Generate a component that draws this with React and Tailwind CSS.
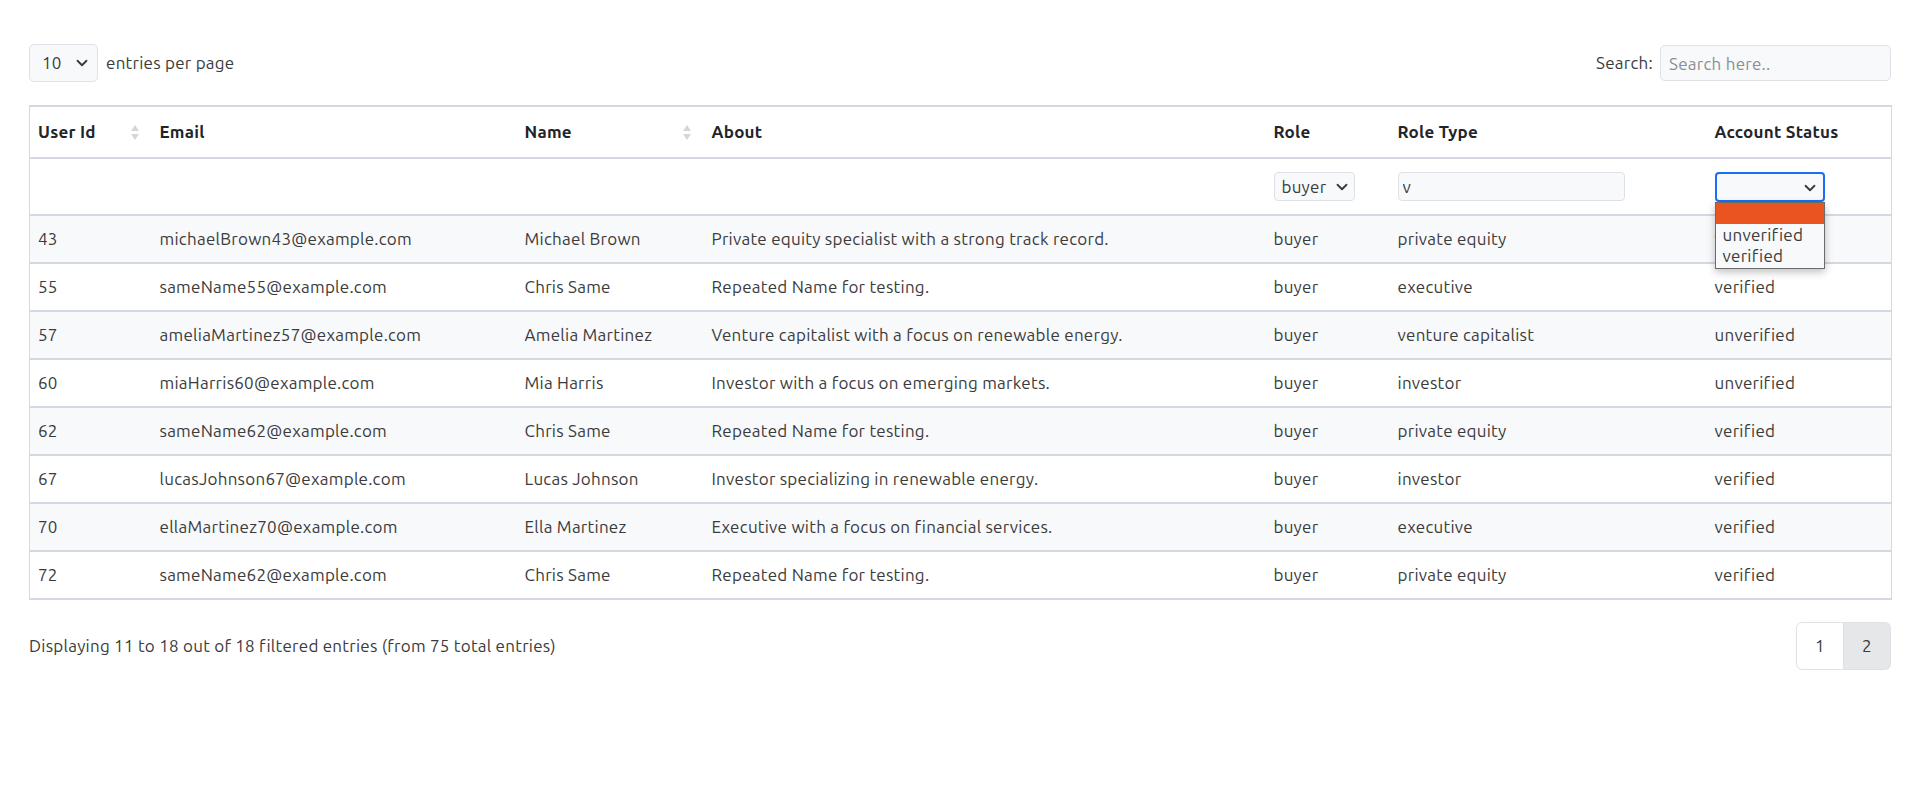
import { useState } from 'react'

const rows = [
  { id: 43, email: 'michaelBrown43@example.com', name: 'Michael Brown', about: 'Private equity specialist with a strong track record.', role: 'buyer', type: 'private equity', status: 'verified' },
  { id: 55, email: 'sameName55@example.com', name: 'Chris Same', about: 'Repeated Name for testing.', role: 'buyer', type: 'executive', status: 'verified' },
  { id: 57, email: 'ameliaMartinez57@example.com', name: 'Amelia Martinez', about: 'Venture capitalist with a focus on renewable energy.', role: 'buyer', type: 'venture capitalist', status: 'unverified' },
  { id: 60, email: 'miaHarris60@example.com', name: 'Mia Harris', about: 'Investor with a focus on emerging markets.', role: 'buyer', type: 'investor', status: 'unverified' },
  { id: 62, email: 'sameName62@example.com', name: 'Chris Same', about: 'Repeated Name for testing.', role: 'buyer', type: 'private equity', status: 'verified' },
  { id: 67, email: 'lucasJohnson67@example.com', name: 'Lucas Johnson', about: 'Investor specializing in renewable energy.', role: 'buyer', type: 'investor', status: 'verified' },
  { id: 70, email: 'ellaMartinez70@example.com', name: 'Ella Martinez', about: 'Executive with a focus on financial services.', role: 'buyer', type: 'executive', status: 'verified' },
  { id: 72, email: 'sameName62@example.com', name: 'Chris Same', about: 'Repeated Name for testing.', role: 'buyer', type: 'private equity', status: 'verified' },
]

function Chevron({ className = '' }) {
  return (
    <svg className={className} width="12" height="12" viewBox="0 0 16 16" fill="none">
      <path d="M2 5l6 6 6-6" stroke="#343a40" strokeWidth="2.4" strokeLinecap="round" strokeLinejoin="round" />
    </svg>
  )
}

function SortIcon() {
  return (
    <span className="flex flex-col items-center gap-[3px]">
      <span className="w-0 h-0 border-x-[4px] border-x-transparent border-b-[6px] border-b-[#d6d6d6]" />
      <span className="w-0 h-0 border-x-[4px] border-x-transparent border-t-[6px] border-t-[#d6d6d6]" />
    </span>
  )
}

function HeadCell({ label, sortable }) {
  return (
    <th className="px-2 text-left font-bold text-[#212529] align-middle">
      <div className="flex items-center justify-between pr-[5px]">
        <span>{label}</span>
        {sortable && <SortIcon />}
      </div>
    </th>
  )
}

export default function App() {
  const [perPage, setPerPage] = useState('10')
  const [roleType, setRoleType] = useState('v')

  return (
    <div className="min-h-[801px] bg-white px-[29px] pt-[44px] text-[17px] tracking-[0.25px] text-[#3b3b3b]" style={{ fontFamily: 'Ubuntu, "Noto Sans", "Open Sans", sans-serif' }}>
      <div className="flex items-center justify-between">
        <div className="flex items-center gap-[8px]">
          <div className="relative">
            <select
              value={perPage}
              onChange={(e) => setPerPage(e.target.value)}
              className="appearance-none w-[69px] h-[38px] pl-[12px] rounded-[5px] border border-[#dee2e6] bg-[#f8f9fa] text-[#3b3b3b] outline-none"
            >
              <option>5</option>
              <option>10</option>
              <option>15</option>
            </select>
            <Chevron className="absolute right-[10px] top-[13px] pointer-events-none" />
          </div>
          <span>entries per page</span>
        </div>
        <div className="flex items-center gap-[7px]">
          <span>Search:</span>
          <input
            placeholder="Search here.."
            className="w-[231px] h-[36px] px-[8px] rounded-[5px] border border-[#dee2e6] bg-[#f8f9fa] outline-none placeholder:text-[#8a8f94]"
          />
        </div>
      </div>

      <table className="mt-[23px] w-[1862px] table-fixed border-collapse border-x border-[#d5d8e0]">
        <colgroup>
          <col className="w-[122px]" />
          <col className="w-[365px]" />
          <col className="w-[187px]" />
          <col className="w-[562px]" />
          <col className="w-[124px]" />
          <col className="w-[317px]" />
          <col className="w-[185px]" />
        </colgroup>
        <thead>
          <tr className="h-[52px] border-y-2 border-[#d5d8e0]">
            <HeadCell label="User Id" sortable />
            <HeadCell label="Email" />
            <HeadCell label="Name" sortable />
            <HeadCell label="About" />
            <HeadCell label="Role" />
            <HeadCell label="Role Type" />
            <HeadCell label="Account Status" />
          </tr>
          <tr className="h-[57px] border-b-2 border-[#d5d8e0]">
            <th />
            <th />
            <th />
            <th />
            <th className="px-2 text-left font-normal">
              <div className="relative w-[81px]">
                <select className="appearance-none w-[81px] h-[29px] pl-[7px] rounded-[4px] border border-[#dee2e6] bg-[#f8f9fa] text-[#3b3b3b] outline-none">
                  <option>buyer</option>
                  <option>seller</option>
                </select>
                <Chevron className="absolute right-[7px] top-[9px] pointer-events-none" />
              </div>
            </th>
            <th className="px-2 text-left font-normal">
              <input
                value={roleType}
                onChange={(e) => setRoleType(e.target.value)}
                className="w-[227px] h-[29px] px-[4px] rounded-[4px] border border-[#dee2e6] bg-[#f8f9fa] text-[#3b3b3b] outline-none"
              />
            </th>
            <th className="px-2 text-left font-normal">
              <div className="relative w-[110px]">
                <div className="w-[110px] h-[30px] rounded-[4px] border-2 border-[#1a6ef5] bg-[#f8f9fa]" />
                <Chevron className="absolute right-[9px] top-[10px] pointer-events-none" />
                <div className="absolute left-0 top-[30px] w-[110px] z-10 border border-[#6b6b6b] bg-[#f8f9fa] text-left shadow-[0_3px_8px_rgba(0,0,0,0.25)] leading-[21px]">
                  <div className="h-[21px] bg-[#e95420]" />
                  <div className="px-[7px] text-[#3b3b3b]">unverified</div>
                  <div className="px-[7px] pb-[2px] text-[#3b3b3b]">verified</div>
                </div>
              </div>
            </th>
          </tr>
        </thead>
        <tbody>
          {rows.map((r, i) => (
            <tr key={r.id} className={`h-[48px] border-b-2 border-[#d5d8e0] ${i % 2 === 0 ? 'bg-[#f8f9fb]' : 'bg-white'}`}>
              <td className="px-2">{r.id}</td>
              <td className="px-2">{r.email}</td>
              <td className="px-2">{r.name}</td>
              <td className="px-2">{r.about}</td>
              <td className="px-2">{r.role}</td>
              <td className="px-2">{r.type}</td>
              <td className="px-2">{r.status}</td>
            </tr>
          ))}
        </tbody>
      </table>

      <div className="mt-[22px] flex items-center justify-between">
        <span>Displaying 11 to 18 out of 18 filtered entries (from 75 total entries)</span>
        <div className="flex">
          <button className="w-[48px] h-[48px] rounded-l-[6px] border border-[#dee2e6] bg-white text-[#3b3b3b]">1</button>
          <button className="w-[47px] h-[48px] rounded-r-[6px] border border-l-0 border-[#dee2e6] bg-[#e6e7e9] text-[#3b3b3b]">2</button>
        </div>
      </div>
    </div>
  )
}
